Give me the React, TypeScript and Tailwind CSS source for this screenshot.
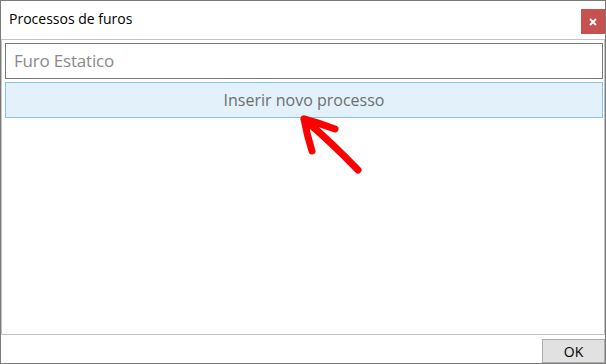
export default function App() {
  return (
    <div
      className="relative w-[606px] h-[364px] border border-[#7a7a7a] bg-white flex flex-col"
      style={{ fontFamily: '"Open Sans", "Noto Sans", sans-serif' }}
    >
      {/* title bar */}
      <div className="h-[38px] flex items-start justify-between shrink-0">
        <div className="pl-[8px] pt-[9px] text-[14px] leading-[18px] text-black">Processos de furos</div>
        <button className="mt-[8px] w-[24px] h-[25px] bg-[#c75050] flex items-center justify-center">
          <svg width="8" height="8" viewBox="0 0 8 8">
            <path d="M1 1 L7 7 M7 1 L1 7" stroke="white" strokeWidth="1.8" />
          </svg>
        </button>
      </div>

      {/* content */}
      <div className="h-[296px] border border-[#c3c3c3] flex flex-col gap-[3px] pt-[3px] pl-[3px] pr-[1px] shrink-0">
        <div className="h-[36px] border border-[#7a7a7a] bg-white flex items-center pl-[8px]">
          <span className="text-[17px] tracking-[-0.2px] text-[#8a8a8a]">Furo Estatico</span>
        </div>
        <div className="h-[36px] border border-[#86c1e8] bg-[#e3f1fa] flex items-center justify-center">
          <span className="text-[16px] text-[#6e6e6e]">Inserir novo processo</span>
        </div>
      </div>

      {/* footer */}
      <div className="flex-1 flex justify-end items-end">
        <button className="w-[63px] h-[24px] bg-[#e1e1e1] border border-[#adadad] text-[14px] text-black flex items-center justify-center">
          OK
        </button>
      </div>

      <svg
        className="absolute left-0 top-0 pointer-events-none"
        width="606"
        height="364"
        viewBox="0 0 606 364"
      >
        <path
          d="M357 169 Q330 141 303 118 M303 118 Q306 134 311 150 M303 118 Q318 122 334 128"
          stroke="#ff0000"
          strokeWidth="7"
          strokeLinecap="round"
          strokeLinejoin="round"
          fill="none"
        />
      </svg>
    </div>
  );
}
